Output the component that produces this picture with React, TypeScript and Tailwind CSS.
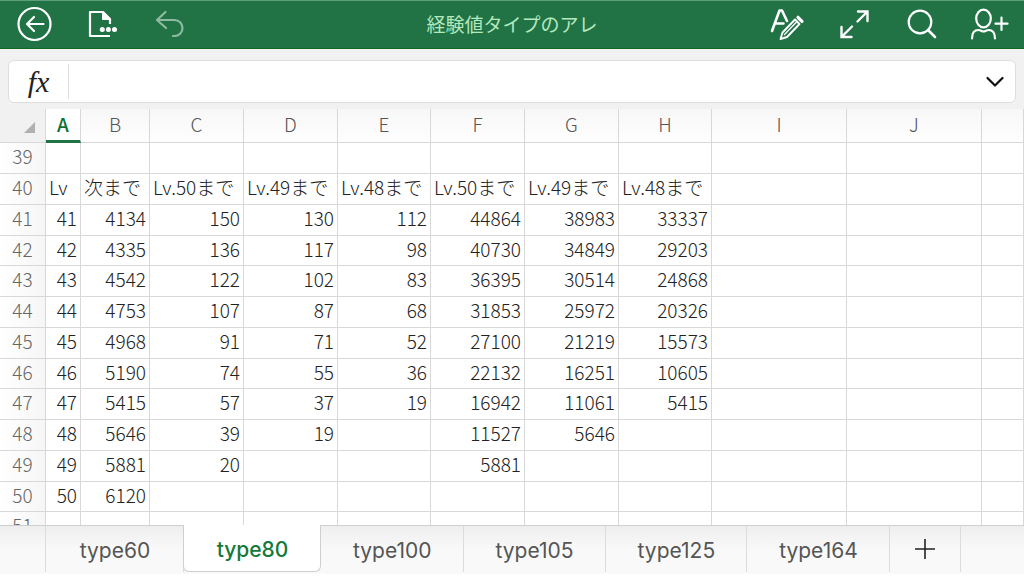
import { useState } from "react";
import type { ReactNode } from "react";

interface Column {
  name: string;
  width?: number;
}

const columns: Column[] = [
  { name: "A", width: 35 },
  { name: "B", width: 69 },
  { name: "C", width: 94 },
  { name: "D", width: 94 },
  { name: "E", width: 93 },
  { name: "F", width: 94 },
  { name: "G", width: 94 },
  { name: "H", width: 93 },
  { name: "I", width: 135 },
  { name: "J", width: 135 },
  { name: "" },
];

const rows: { [row: number]: string[] } = {
  39: [],
  40: ["Lv", "次まで", "Lv.50まで", "Lv.49まで", "Lv.48まで", "Lv.50まで", "Lv.49まで", "Lv.48まで"],
  41: ["41", "4134", "150", "130", "112", "44864", "38983", "33337"],
  42: ["42", "4335", "136", "117", "98", "40730", "34849", "29203"],
  43: ["43", "4542", "122", "102", "83", "36395", "30514", "24868"],
  44: ["44", "4753", "107", "87", "68", "31853", "25972", "20326"],
  45: ["45", "4968", "91", "71", "52", "27100", "21219", "15573"],
  46: ["46", "5190", "74", "55", "36", "22132", "16251", "10605"],
  47: ["47", "5415", "57", "37", "19", "16942", "11061", "5415"],
  48: ["48", "5646", "39", "19", "", "11527", "5646", ""],
  49: ["49", "5881", "20", "", "", "5881", "", ""],
  50: ["50", "6120"],
  51: [],
};

const sheets = ["type60", "type80", "type100", "type105", "type125", "type164"];

function Icon({ children }: { children: ReactNode }) {
  return (
    <svg
      viewBox="0 0 40 40"
      className="size-10 shrink-0"
      fill="none"
      stroke="currentColor"
      strokeWidth="2.2"
      strokeLinecap="round"
      strokeLinejoin="round"
      aria-hidden="true"
    >
      {children}
    </svg>
  );
}

function TopBar() {
  const left = "flex w-[68px] items-center justify-center";
  const right = "flex w-[67px] items-center justify-center";

  return (
    <header className="grid h-[49px] shrink-0 grid-cols-[1fr_auto_1fr] items-center border-t border-b border-t-[#5f9e7b] border-b-[#0b6a1c] bg-[#217346] pb-px text-white">
      <div className="flex">
        <button className={left} aria-label="戻る">
          <Icon>
            <circle cx="20.5" cy="20" r="16" />
            <path d="M29.5 20h-16M20 13l-7 7 7 7" />
          </Icon>
        </button>
        <button className={left} aria-label="ファイル">
          <Icon>
            <path d="M28 20v-5l-7-7H8v24h20" strokeLinecap="butt" />
            <path d="M20.5 8v7.5H28z" fill="currentColor" strokeWidth="1" />
            <g fill="currentColor" stroke="none">
              <circle cx="20.3" cy="25.5" r="2.5" />
              <circle cx="26.4" cy="25.5" r="2.5" />
              <circle cx="32.5" cy="25.5" r="2.5" />
            </g>
          </Icon>
        </button>
        <button className="flex w-[68px] items-center justify-center text-[#8fbaa2]" aria-label="元に戻す">
          <Icon>
            <path d="M15.5 8 7 16l9 8M7 16h17.5a8 8 0 0 1 0 16H23" />
          </Icon>
        </button>
      </div>
      <h1 className="font-['Noto_Sans_CJK_JP',sans-serif] text-[19px] leading-6 font-normal text-[#b4e8bd]">経験値タイプのアレ</h1>
      <div className="flex justify-end pr-0.5">
        <button className={right} aria-label="書式">
          <Icon>
            <path d="M4 27 11.5 6.5h2.5L19 17M7 19.5h8.500" strokeWidth="2.600" />
            <path d="m12.500 35 2-6.500L27 15.500l4.500 4.500L19 33z" strokeWidth="1.900" />
            <path d="m28.500 18-12 12.500" strokeWidth="1.300" />
            <path d="m30 13.300 4 4" strokeWidth="3.200" />
          </Icon>
        </button>
        <button className={right} aria-label="全画面表示">
          <Icon>
            <path d="M23 7.500h9.500v9.500M32.500 7.500 22.500 17.500M6.500 23v10h10M6.500 33 17 22.500" strokeWidth="2.400" strokeLinejoin="miter" />
          </Icon>
        </button>
        <button className={right} aria-label="検索">
          <Icon>
            <circle cx="18" cy="18" r="11.300" />
            <path d="m26 26 7 7" strokeWidth="2.600" />
          </Icon>
        </button>
        <button className={right} aria-label="共有">
          <Icon>
            <ellipse cx="14.500" cy="14.500" rx="7.300" ry="8.800" />
            <path d="M3 34.500c0-5.500 2.500-8.500 6.500-8.500 2 0 3 1.500 5 1.500s3-1.500 5-1.500c4 0 6.500 3 6.500 8.500M32.500 13.500v12.500M26.500 19.700h12" />
          </Icon>
        </button>
      </div>
    </header>
  );
}

function FormulaBar() {
  const [value, setValue] = useState("");

  return (
    <div className="shrink-0 bg-[#f1f1f1] px-2 pt-[11px] pb-1.5">
      <div className="flex h-[43px] items-center rounded-md border border-[#dedede] bg-white">
        <label
          htmlFor="formula"
          className="flex h-[35px] w-[60px] items-center justify-center border-r border-[#dedede] font-['Liberation_Serif',serif] text-[30px] leading-8 text-[#222] italic"
        >
          fx
        </label>
        <input
          id="formula"
          type="text"
          value={value}
          onChange={e => setValue(e.target.value)}
          className="h-full min-w-0 flex-1 px-2 text-lg outline-none"
        />
        <button className="flex h-full w-10 items-center justify-center text-[#111]" aria-label="数式バーを展開">
          <svg viewBox="0 0 18 12" className="h-3 w-[18px]" fill="none" stroke="currentColor" strokeWidth="2.2" strokeLinecap="round" strokeLinejoin="round" aria-hidden="true">
            <path d="m1.500 2 7.500 7.500L16.500 2" />
          </svg>
        </button>
      </div>
    </div>
  );
}

function Grid() {
  return (
    <div className="min-h-0 flex-1 overflow-hidden bg-white">
      <table className="w-full table-fixed border-separate border-spacing-0 font-['Noto_Sans_CJK_JP',sans-serif] text-[19px] leading-6 font-light whitespace-nowrap text-[#222]">
        <colgroup>
          <col className="w-[46px]" />
          {columns.map(col => (
            <col key={col.name} style={{ width: col.width }} />
          ))}
        </colgroup>
        <thead>
          <tr className="h-[34px]">
            <td className="border-r border-b border-[#d8d8d8] bg-[#f1f1f1] p-0">
              <svg viewBox="0 0 11 11" className="mt-1 mr-2.5 ml-auto size-[11px] text-[#b0b0b0]" fill="currentColor" aria-hidden="true">
                <path d="M11 0v11H0z" />
              </svg>
            </td>
            {columns.map((col, i) => (
              <th
                key={col.name}
                scope="col"
                className={
                  i === 0
                    ? "border-r border-b-3 border-r-[#d8d8d8] border-b-[#217346] bg-white p-0 pb-0.5 font-medium text-[#0f7034]"
                    : "border-r border-b border-[#d8d8d8] bg-linear-to-b from-[#f7f7f7] to-[#fefefe] p-0 pb-1 font-light text-[#555]"
                }
              >
                {col.name}
              </th>
            ))}
          </tr>
        </thead>
        <tbody>
          {Object.entries(rows).map(([row, cells]) => (
            <tr key={row} className="h-[31px] nth-[4n]:h-[30px]">
              <th scope="row" className="border-r border-b border-[#d8d8d8] bg-linear-to-r from-white to-[#f6f6f6] p-0 pb-1 font-light text-[#666]">
                {row}
              </th>
              {columns.map((col, i) => (
                <td
                  key={col.name}
                  className={
                    row === "40"
                      ? "border-r border-b border-[#d8d8d8] pt-0 pr-0 pb-1 pl-[3px]"
                      : "border-r border-b border-[#d8d8d8] pt-0 pr-[3px] pb-1 pl-0 text-right"
                  }
                >
                  {cells[i]}
                </td>
              ))}
            </tr>
          ))}
        </tbody>
      </table>
    </div>
  );
}

function SheetTabs() {
  const [active, setActive] = useState("type80");

  return (
    <div className="flex h-[51px] shrink-0 border-b-2 border-white bg-linear-to-b from-[#efeeee] to-[#f9f9f9] to-50% font-['Inter',sans-serif] text-[21px] text-[#555]">
      <div className="mb-0.5 w-[46px] border-t border-r border-t-[#cfcfcf] border-r-[#dcdcdc]" />
      <div className="flex" role="tablist">
        {sheets.map(sheet => (
          <button
            key={sheet}
            role="tab"
            aria-selected={sheet === active}
            onClick={() => setActive(sheet)}
            className={
              sheet === active
                ? "mb-0.5 -ml-px min-w-[138px] rounded-b-md border-x border-b border-[#cfcfcf] bg-white pt-1 pr-[31px] pl-8 font-medium text-[#127a3a]"
                : "mb-0.5 min-w-[138px] border-t border-r border-t-[#cfcfcf] border-r-[#dcdcdc] pt-1 pr-[31px] pl-8"
            }
          >
            {sheet}
          </button>
        ))}
      </div>
      <button className="mb-0.5 flex w-[71px] items-center justify-center border-t border-r border-t-[#cfcfcf] border-r-[#dcdcdc] text-[#222]" aria-label="シートを追加">
        <svg viewBox="0 0 22 22" className="size-[22px]" fill="none" stroke="currentColor" strokeWidth="1.6" aria-hidden="true">
          <path d="M11 1v20M1 11h20" />
        </svg>
      </button>
      <div className="mb-0.5 flex-1 border-t border-[#cfcfcf]" />
    </div>
  );
}

export default function App() {
  return (
    <div className="flex h-screen flex-col overflow-hidden bg-white">
      <TopBar />
      <FormulaBar />
      <Grid />
      <SheetTabs />
    </div>
  );
}
